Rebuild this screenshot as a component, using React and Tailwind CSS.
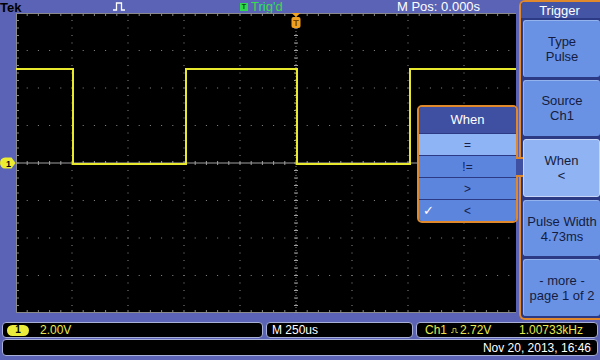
import React from "react";

const W = 560;
const H = 300;
const DX = 56;
const DY = 37.5;

const buttons = [
  ["Type", "Pulse"],
  ["Source", "Ch1"],
  ["When", "<"],
  ["Pulse Width", "4.73ms"],
  ["- more -", "page 1 of 2"],
];

const whenRows = ["=", "!=", ">", "<"];

// graticule dots on the major lines
const dots = [];
for (let k = 1; k < 10; k++) {
  if (k === 5) continue;
  for (let i = 0; i <= 40; i++) dots.push([k * DX, i * (DY / 5)]);
}
for (let j = 1; j < 8; j++) {
  if (j === 4) continue;
  for (let i = 0; i <= 50; i++) dots.push([i * (DX / 5), j * DY]);
}

const hTicks = Array.from({ length: 51 }, (_, i) => i * (DX / 5));
const vTicks = Array.from({ length: 41 }, (_, i) => i * (DY / 5));

const PulseIcon = ({ color = "#ffffff", w = 12, h = 9 }) => (
  <svg width={w} height={h} viewBox="0 0 12 9">
    <path d="M0 8H3.5V1H8.5V8H12" fill="none" stroke={color} strokeWidth="1.3" />
  </svg>
);

const Screen = () => (
  <svg width={W} height={H} viewBox={`0 0 ${W} ${H}`} className="block">
    {dots.map(([x, y], i) => (
      <rect key={i} x={x - 0.5} y={y - 0.5} width="1" height="1" fill="#8c8c8c" />
    ))}
    {/* border */}
    <rect x="0.5" y="0.5" width={W - 1} height={H - 1} fill="none" stroke="#8a8a8a" />
    {hTicks.map((x, i) => (
      <g key={"bt" + i} stroke="#8a8a8a">
        <line x1={x} y1="0" x2={x} y2="3" />
        <line x1={x} y1={H} x2={x} y2={H - 3} />
      </g>
    ))}
    {vTicks.map((y, i) => (
      <g key={"bl" + i} stroke="#8a8a8a">
        <line x1="0" y1={y} x2="3" y2={y} />
        <line x1={W} y1={y} x2={W - 3} y2={y} />
      </g>
    ))}
    {/* center cross */}
    <line x1="0" y1="150" x2={W} y2="150" stroke="#a0a0a0" />
    <line x1="280" y1="0" x2="280" y2={H} stroke="#8a8a8a" strokeDasharray="1 2" />
    {hTicks.map((x, i) => (
      <line key={"ch" + i} x1={x} y1="148" x2={x} y2="152" stroke="#a0a0a0" />
    ))}
    {vTicks.map((y, i) => (
      <line key={"cv" + i} x1="278" y1={y} x2="282" y2={y} stroke="#a0a0a0" />
    ))}
    {/* ch1 trace */}
    <path
      d="M0 56H57V151H170V56H281V151H394V56H560"
      fill="none"
      stroke="#e8e82e"
      strokeWidth="2"
    />
    {/* trigger position marker */}
    <polygon points="275.5,0 284.5,0 280,4" fill="#f2a524" />
    <rect x="275.5" y="4" width="9" height="11" rx="2" fill="#f0a020" />
    <text x="280" y="13" fontSize="9" fontWeight="bold" textAnchor="middle" fill="#7a4200" fontFamily="Liberation Sans, sans-serif">
      T
    </text>
  </svg>
);

export default function App() {
  return (
    <div className="w-[600px] h-[360px] bg-[#5a63b5] relative overflow-hidden font-['Liberation_Sans',Arial,sans-serif]">
      {/* top status bar */}
      <div className="h-[13px] flex items-center leading-none">
        <div className="w-[113px] text-[13px] font-bold text-black leading-[13px] pt-[1px]">Tek</div>
        <div className="w-[127px] flex items-center">
          <PulseIcon />
        </div>
        <div className="w-[157px] flex items-center gap-[3px]">
          <span className="w-[8px] h-[8px] bg-[#2fd84c] text-[7px] font-bold text-[#0b4a12] flex items-center justify-center leading-none">
            T
          </span>
          <span className="text-[13px] text-[#34e04e]">Trig'd</span>
        </div>
        <div className="text-[13px] text-white">M Pos: 0.000s</div>
      </div>

      {/* display */}
      <div className="flex h-[300px]">
        <div className="w-[16px] relative">
          <svg width="16" height="12" viewBox="0 0 16 12" className="absolute left-0 top-[144px]">
            <path d="M5 0.5H11.5L15.5 6L11.5 11.5H5A5 5.5 0 0 1 5 0.5Z" fill="#ecec30" />
            <text x="8.5" y="9.5" fontSize="9" fontWeight="bold" textAnchor="middle" fill="#000" fontFamily="Liberation Sans, sans-serif">
              1
            </text>
          </svg>
        </div>
        <div className="w-[560px] bg-black shrink-0">
          <Screen />
        </div>
      </div>

      {/* bottom readouts */}
      <div className="mt-[9px] flex h-[16px] pl-[2px] gap-[3px] text-[12px] leading-none">
        <div className="w-[261px] bg-black border border-[#a9b0d8] rounded-[4px] flex items-center pl-[4px]">
          <span className="w-[22px] h-[11px] rounded-full bg-[#ecec3c] text-black text-[10px] font-bold flex items-center justify-center">
            1
          </span>
          <span className="ml-[11px] text-[#e8e84c]">2.00V</span>
        </div>
        <div className="w-[147px] bg-black border border-[#a9b0d8] rounded-[4px] flex items-center pl-[5px] text-white">
          M 250us
        </div>
        <div className="w-[182px] bg-black border border-[#a9b0d8] rounded-[4px] flex items-center pl-[8px] text-[#e8e84c]">
          <span>Ch1</span>
          <span className="ml-[4px] mr-[2px]">
            <PulseIcon color="#e8e84c" w={7} h={7} />
          </span>
          <span>2.72V</span>
          <span className="ml-auto pr-[14px]">1.00733kHz</span>
        </div>
      </div>
      <div className="mt-[1px] ml-[2px] w-[596px] h-[17px] bg-black border border-[#a9b0d8] rounded-[4px] flex items-center justify-end pr-[6px] text-[12px] text-white leading-none">
        Nov 20, 2013, 16:46
      </div>

      {/* side menu */}
      <div className="absolute left-[516px] top-0 w-[84px] h-[320px] pl-[3px] bg-[#5a63b5]">
        <div className="h-full border-l-2 border-t-2 border-b-2 border-[#e0882c] rounded-l-[6px] bg-[#2c3a86] flex flex-col overflow-hidden">
          <div className="h-[16px] bg-[#4555a5] text-white text-[13px] flex items-center justify-center leading-none pr-[2px]">
            Trigger
          </div>
          <div className="flex-1 flex flex-col gap-[3px] pt-[2px] pl-[2px] pb-[2px]">
            {buttons.map(([a, b], i) => (
              <div
                key={i}
                className={
                  i === 2
                    ? "flex-1 rounded-[3px] bg-[#8fb3f3] border border-[#c5d6f8] flex flex-col items-center justify-center text-[13px] leading-[15px] text-[#141c40]"
                    : "flex-1 rounded-[3px] bg-[#6a92e4] border-t border-l border-[#93b3ee] flex flex-col items-center justify-center text-[13px] leading-[15px] text-[#141c40]"
                }
              >
                <span>{a}</span>
                <span>{b}</span>
              </div>
            ))}
          </div>
        </div>
      </div>

      {/* "When" popup */}
      <div className="absolute left-[417px] top-[105px] w-[101px] border-2 border-[#e0882c] rounded-[5px] bg-[#2c3a86] overflow-hidden flex flex-col">
        <div className="h-[26px] bg-[#3f4fa1] text-white text-[13px] flex items-center justify-center">When</div>
        {whenRows.map((r, i) => (
          <div
            key={r}
            className={
              i === 0
                ? "h-[21px] mt-[1px] bg-[#8fb4f5] relative flex items-center justify-center text-[12px] text-[#17204a]"
                : "h-[21px] mt-[1px] bg-[#5c86de] relative flex items-center justify-center text-[12px] text-[#17204a]"
            }
          >
            {i === 3 && <span className="absolute left-[4px] text-white text-[13px]">✓</span>}
            {r}
          </div>
        ))}
      </div>
      <div className="absolute left-[516px] top-[157px] w-[7px] h-[20px] bg-[#3f4fa1] border-y-2 border-[#e0882c]" />
    </div>
  );
}
